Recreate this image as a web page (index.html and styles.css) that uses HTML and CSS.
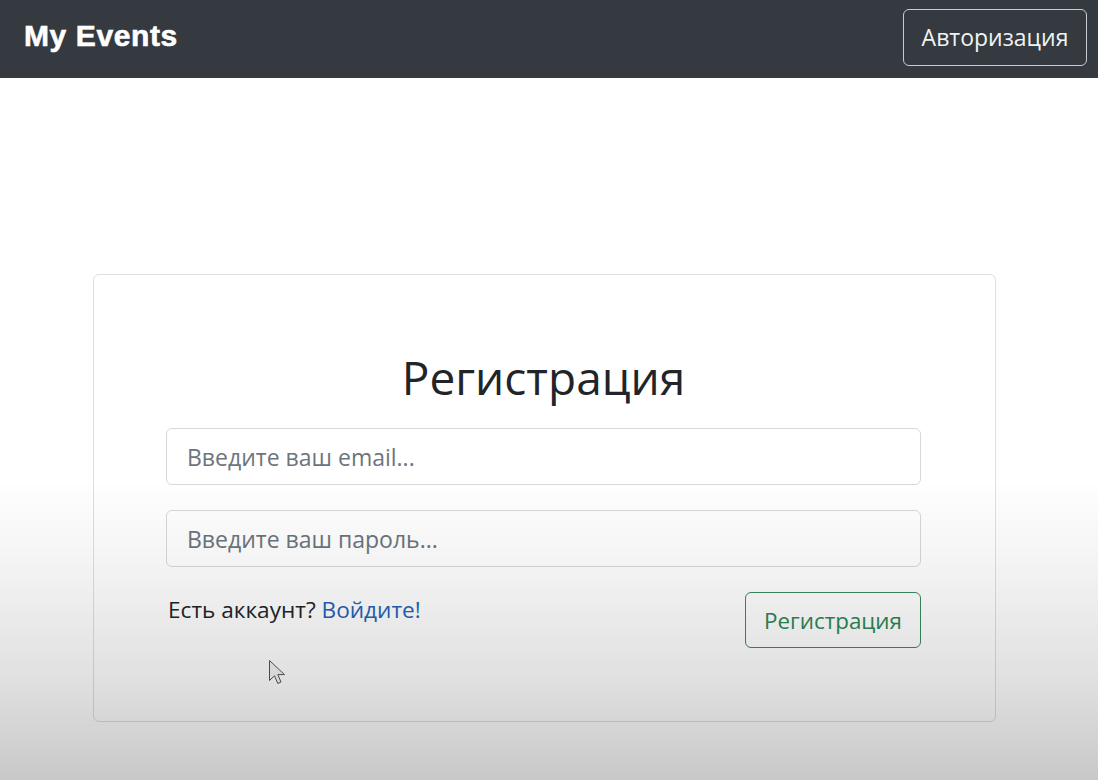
FILE: index.html
```html
<!DOCTYPE html>
<html lang="ru">
<head>
<meta charset="utf-8">
<title>My Events</title>
<link rel="stylesheet" href="styles.css">
</head>
<body>
<nav class="navbar">
  <span class="brand">My Events</span>
  <button class="btn btn-light-outline">Авторизация</button>
</nav>
<main class="page">
  <div class="card">
    <h2 class="title">Регистрация</h2>
    <input class="field" type="email" placeholder="Введите ваш email...">
    <input class="field" type="password" placeholder="Введите ваш пароль...">
    <div class="actions">
      <div class="hint">Есть аккаунт? <a href="#" class="link">Войдите!</a></div>
      <button class="btn btn-green-outline">Регистрация</button>
    </div>
  </div>
</main>
<svg class="cursor" width="22" height="28" viewBox="0 0 22 28">
  <path d="M2.5 1.5 L2.5 21.5 L7.5 16.8 L10.8 24.5 L14 23 L10.8 15.6 L17.5 15.6 Z" fill="#f4f4f4" stroke="#555" stroke-width="1"/>
</svg>
</body>
</html>
```
FILE: styles.css
```css
html, body {
  margin: 0;
  padding: 0;
}
body {
  background: #ffffff;
  font-family: "Open Sans", "Noto Sans", sans-serif;
  color: #212529;
  min-height: 780px;
  position: relative;
}
body::after {
  content: "";
  position: fixed;
  left: 0;
  right: 0;
  top: 0;
  bottom: 0;
  pointer-events: none;
  background: linear-gradient(to bottom, rgba(0,0,0,0) 0, rgba(0,0,0,0) 480px, rgba(0,0,0,0.045) 560px, rgba(0,0,0,0.12) 680px, rgba(0,0,0,0.215) 780px);
}
.navbar {
  height: 78px;
  background: #343a40;
  display: flex;
  align-items: flex-start;
  justify-content: space-between;
  padding: 0 11px 0 24px;
  box-sizing: border-box;
}
.brand {
  font-family: "Liberation Sans", Arial, sans-serif;
  font-weight: bold;
  font-size: 30px;
  letter-spacing: 0.6px;
  color: #ffffff;
  line-height: 34px;
  margin-top: 19px;
  -webkit-text-stroke: 0.6px #ffffff;
}
.btn {
  font-family: "Open Sans", "Noto Sans", sans-serif;
  font-size: 23px;
  line-height: 33px;
  background: transparent;
  border-radius: 6px;
  cursor: pointer;
}
.btn-light-outline {
  margin-top: 9px;
  height: 57px;
  width: 184px;
  padding: 0;
  border: 1px solid #c9cbcd;
  color: #f1f2f3;
}
.page {
  padding: 196px 0 0 93px;
}
.card {
  width: 903px;
  box-sizing: border-box;
  border: 1px solid #dfdfdf;
  border-radius: 6px;
  padding: 74px 74px 73px 72px;
  background: #ffffff;
}
.title {
  margin: 0 0 22px;
  text-align: center;
  font-weight: 400;
  font-size: 46px;
  line-height: 57px;
  color: #212529;
}
.field {
  display: block;
  width: 100%;
  box-sizing: border-box;
  height: 57px;
  margin: 0 0 25px;
  padding: 0 20px;
  font-family: "Open Sans", "Noto Sans", sans-serif;
  font-size: 23px;
  color: #495057;
  border: 1px solid #d6d9dc;
  border-radius: 6px;
  background: #ffffff;
  outline: none;
}
.field::placeholder {
  color: #6c757d;
}
.actions {
  display: flex;
  justify-content: space-between;
  align-items: flex-start;
}
.hint {
  font-size: 22.6px;
  line-height: 36px;
  padding-left: 2px;
  color: #212529;
}
.link {
  color: #2563b8;
  text-decoration: none;
}
.btn-green-outline {
  height: 56px;
  width: 176px;
  padding: 0;
  font-size: 22.4px;
  border: 1px solid #3a8c5f;
  color: #2e8658;
}
.cursor {
  position: absolute;
  left: 267px;
  top: 659px;
}
```
